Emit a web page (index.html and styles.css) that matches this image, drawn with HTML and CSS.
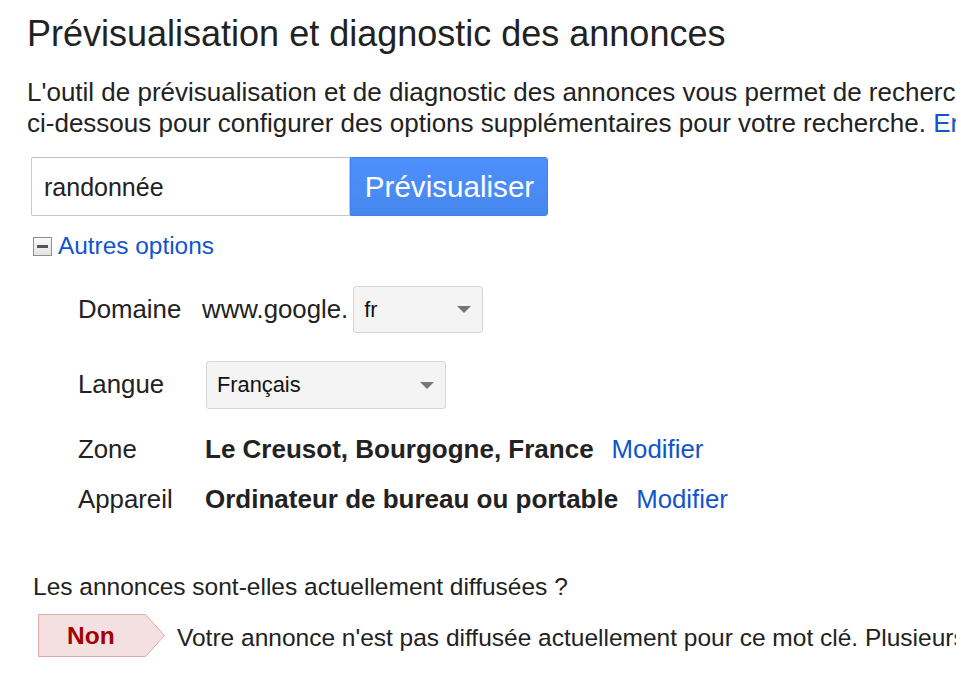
FILE: index.html
```html
<!DOCTYPE html>
<html lang="fr">
<head>
<meta charset="utf-8">
<title>Prévisualisation et diagnostic des annonces</title>
<link rel="stylesheet" href="styles.css">
</head>
<body>
<div class="page">
  <h1 class="title">Prévisualisation et diagnostic des annonces</h1>
  <p class="intro">L'outil de prévisualisation et de diagnostic des annonces vous permet de rechercher votre annonce sur Google sans influer sur ses statistiques. Utilisez les options<br>ci-dessous pour configurer des options supplémentaires pour votre recherche. <a class="link" href="#">En savoir plus</a></p>

  <div class="search">
    <div class="search-input">randonnée</div>
    <button class="btn-primary" type="button">Prévisualiser</button>
  </div>

  <div class="toggle">
    <svg class="toggle-icon" width="20" height="20" viewBox="0 0 20 20" aria-hidden="true">
      <defs>
        <linearGradient id="g" x1="0" y1="0" x2="0" y2="1">
          <stop offset="0" stop-color="#fbfbfb"/>
          <stop offset="1" stop-color="#e2e2e2"/>
        </linearGradient>
      </defs>
      <rect x="0.5" y="0.5" width="18" height="18" fill="url(#g)" stroke="#8e8e8e"/>
      <rect x="4" y="8" width="11" height="3" fill="#555"/>
    </svg>
    <a class="link" href="#">Autres options</a>
  </div>

  <div class="options">
    <div class="opt-row row-domain">
      <span class="opt-label">Domaine</span>
      <span class="opt-prefix">www.google.</span>
      <div class="select select-tld"><span>fr</span><i class="caret"></i></div>
    </div>
    <div class="opt-row row-lang">
      <span class="opt-label">Langue</span>
      <div class="select select-lang"><span>Français</span><i class="caret"></i></div>
    </div>
    <div class="opt-row row-zone">
      <span class="opt-label">Zone</span>
      <strong class="opt-value">Le Creusot, Bourgogne, France</strong>
      <a class="link opt-link" href="#">Modifier</a>
    </div>
    <div class="opt-row row-device">
      <span class="opt-label">Appareil</span>
      <strong class="opt-value">Ordinateur de bureau ou portable</strong>
      <a class="link opt-link" href="#">Modifier</a>
    </div>
  </div>

  <p class="question">Les annonces sont-elles actuellement diffusées ?</p>
  <div class="status">
    <div class="badge">
      <svg class="badge-shape" width="128" height="43" viewBox="0 0 128 43" aria-hidden="true">
        <path d="M0.5 0.5 H107.5 L126.5 21.5 L107.5 42.5 H0.5 Z" fill="#f4e0e1" stroke="#e3a8a9"/>
      </svg>
      <span class="badge-text">Non</span>
    </div>
    <span class="status-text">Votre annonce n'est pas diffusée actuellement pour ce mot clé. Plusieurs raisons peuvent expliquer cela.</span>
  </div>
</div>
</body>
</html>
```

FILE: styles.css
```css
html, body {
  margin: 0;
  padding: 0;
  background: #fff;
  overflow: hidden;
}

body {
  font-family: "Liberation Sans", Arial, sans-serif;
  color: #222;
}

.page {
  width: 956px;
  height: 694px;
  overflow: hidden;
  padding-left: 27px;
  box-sizing: border-box;
}

.title {
  margin: 0;
  padding-top: 14px;
  font-size: 36px;
  line-height: 40px;
  font-weight: normal;
  color: #222;
  white-space: nowrap;
}

.intro {
  margin: 23px 0 0;
  font-size: 26px;
  line-height: 31px;
  white-space: nowrap;
}

.link {
  color: #1155cc;
  text-decoration: none;
}

.search {
  display: flex;
  margin-top: 18px;
  margin-left: 4px;
  height: 59px;
}

.search-input {
  width: 319px;
  height: 59px;
  box-sizing: border-box;
  border: 1px solid #c8c8c8;
  border-top-color: #c0c0c0;
  border-radius: 2px 0 0 2px;
  padding-left: 12px;
  font-size: 25px;
  line-height: 58px;
  color: #222;
}

.btn-primary {
  width: 198px;
  height: 59px;
  margin: 0;
  padding: 0 0 0 1px;
  border: 1px solid #3d82f0;
  border-radius: 0 3px 3px 0;
  background: linear-gradient(#4d90fe, #4787ed);
  color: #fff;
  font-family: "Liberation Sans", Arial, sans-serif;
  font-size: 29.6px;
  line-height: 58px;
}

.toggle {
  display: flex;
  align-items: center;
  margin-top: 17px;
  margin-left: 6px;
  height: 26px;
  font-size: 24.4px;
}

.toggle-icon {
  margin-right: 5px;
  margin-top: 1px;
}

.options {
  margin-left: 51px;
  display: flex;
  flex-direction: column;
}

.opt-row {
  display: flex;
  align-items: center;
  font-size: 25.8px;
  white-space: nowrap;
}

.opt-label {
  width: 124px;
  flex: none;
}

.row-domain {
  margin-top: 27px;
  height: 46px;
}

.row-lang {
  margin-top: 29px;
  height: 47px;
}

.row-zone {
  margin-top: 28px;
  height: 26px;
}

.row-device {
  margin-top: 24px;
  height: 26px;
}

.opt-prefix {
  margin-right: 5px;
}

.select {
  position: relative;
  box-sizing: border-box;
  border: 1px solid #d6d6d6;
  border-radius: 3px;
  background: #f4f4f4;
  font-size: 21.8px;
  color: #111;
  display: flex;
  align-items: center;
  padding-left: 10px;
  padding-top: 1px;
}

.select-tld {
  width: 130px;
  height: 47px;
}

.select-lang {
  width: 240px;
  height: 48px;
  margin-left: 4px;
}

.caret {
  position: absolute;
  right: 11px;
  top: 50%;
  margin-top: -3px;
  width: 0;
  height: 0;
  border-left: 7px solid transparent;
  border-right: 7px solid transparent;
  border-top: 7px solid #777;
}

.opt-value {
  margin-left: 3px;
  font-weight: bold;
  color: #222;
  font-size: 26px;
}

.opt-link {
  margin-left: 18px;
}

.question {
  margin: 63px 0 0 6px;
  font-size: 24.5px;
  line-height: 24px;
  white-space: nowrap;
  color: #222;
}

.status {
  display: flex;
  align-items: center;
  margin-top: 15px;
  margin-left: 11px;
  height: 43px;
  white-space: nowrap;
}

.badge {
  position: relative;
  width: 128px;
  height: 43px;
  flex: none;
}

.badge-shape {
  display: block;
}

.badge-text {
  position: absolute;
  left: 29px;
  top: 0;
  line-height: 43px;
  font-size: 24.5px;
  font-weight: bold;
  color: #a30000;
}

.status-text {
  margin-left: 11px;
  font-size: 24.5px;
  color: #222;
  padding-top: 5px;
}
```
